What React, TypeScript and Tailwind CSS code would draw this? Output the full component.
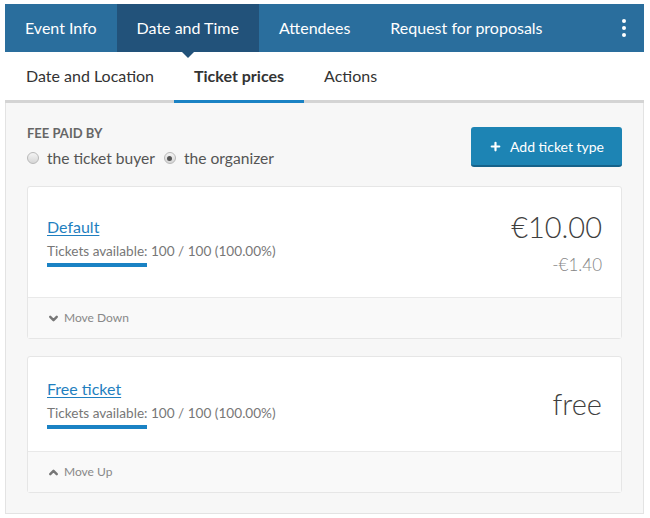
import { ChevronDown, ChevronUp, Plus } from 'lucide-react'

const topTabs = ['Event Info', 'Date and Time', 'Attendees', 'Request for proposals']
const subTabs = ['Date and Location', 'Ticket prices', 'Actions']

type Ticket = { name: string; price: string; fee?: string; move: 'down' | 'up' }

const tickets: Ticket[] = [
  { name: 'Default', price: '€10.00', fee: '-€1.40', move: 'down' },
  { name: 'Free ticket', price: 'free', move: 'up' },
]

function Radio({ checked }: { checked?: boolean }) {
  return (
    <span className="w-3 h-3 rounded-full border border-[#b9b9b9] bg-gradient-to-b from-[#f4f4f4] to-[#d6d6d6] flex items-center justify-center shrink-0">
      {checked && <span className="w-[5px] h-[5px] rounded-full bg-[#555]" />}
    </span>
  )
}

function TicketCard({ t }: { t: Ticket }) {
  return (
    <div className="border border-[#e6e6e6] rounded-[3px] bg-white">
      <div className="flex items-center justify-between px-[19px] py-[22px]">
        <div>
          <a className="block text-[16px] leading-5 text-[#1f7fc0] underline underline-offset-2">{t.name}</a>
          <div className="text-[13.6px] leading-[18px] text-[#777] mt-[5px]">Tickets available: 100 / 100 (100.00%)</div>
          <div className="w-[100px] h-1 bg-[#1a82c4] mt-[3px]" />
        </div>
        <div className="text-right">
          <div className="text-[29px] leading-9 font-light text-[#3f3f3f]">{t.price}</div>
          {t.fee && <div className="text-[17px] leading-5 font-light text-[#858585] mt-[10px]">{t.fee}</div>}
        </div>
      </div>
      <div className="border-t border-[#e9e9e9] bg-[#f9f9f9] px-[19px] py-3 flex items-center gap-1 text-[12px] leading-4 text-[#888]">
        {t.move === 'down' ? (
          <ChevronDown size={13} strokeWidth={4.5} className="text-[#777]" />
        ) : (
          <ChevronUp size={13} strokeWidth={4.5} className="text-[#777]" />
        )}
        {t.move === 'down' ? 'Move Down' : 'Move Up'}
      </div>
    </div>
  )
}

export default function App() {
  return (
    <div className="min-h-[518px] bg-white pt-1 pl-[5px] pr-[6px] font-['Lato','Open_Sans',sans-serif] text-[#555]">
      {/* top tabs */}
      <div className="h-12 bg-[#2a6e9d] flex items-stretch text-white text-[16px]">
        {topTabs.map(tab => (
          <div
            key={tab}
            className={`relative px-5 flex items-center ${tab === 'Date and Time' ? 'bg-[#22527a]' : ''}`}
          >
            {tab}
            {tab === 'Date and Time' && (
              <span className="absolute left-1/2 -translate-x-1/2 top-full w-0 h-0 border-x-[6px] border-x-transparent border-t-[6px] border-t-[#22527a]" />
            )}
          </div>
        ))}
        <div className="ml-auto w-10 flex flex-col items-center justify-center gap-[3px]">
          <span className="w-1 h-1 rounded-full bg-white" />
          <span className="w-1 h-1 rounded-full bg-white" />
          <span className="w-1 h-1 rounded-full bg-white" />
        </div>
      </div>

      {/* sub tabs */}
      <div className="bg-white flex border-b-[3px] border-[#d4d4d4] pl-px text-[16px] text-[#333]">
        {subTabs.map(tab => (
          <div
            key={tab}
            className={`h-[51px] px-5 flex items-center -mb-[3px] border-b-[3px] ${
              tab === 'Ticket prices' ? 'font-bold border-[#1a82c4]' : 'border-transparent'
            }`}
          >
            {tab}
          </div>
        ))}
      </div>

      {/* content */}
      <div className="bg-[#f7f7f7] border-x border-b border-[#e3e3e3] px-[21px] pt-[23px] pb-5">
        <div className="flex items-center justify-between">
          <div>
            <div className="text-[13px] leading-[14px] font-bold text-[#666] uppercase">Fee paid by</div>
            <div className="flex items-center mt-2 text-[15.6px] leading-5 text-[#555]">
              <Radio />
              <span className="ml-2 mr-[9px]">the ticket buyer</span>
              <Radio checked />
              <span className="ml-2">the organizer</span>
            </div>
          </div>
          <button className="h-10 w-[151px] rounded-[3px] bg-[#1d84b4] border-b-2 border-[#15628a] text-white text-[14px] flex items-center justify-center gap-2">
            <Plus size={13} strokeWidth={4} />
            Add ticket type
          </button>
        </div>

        <div className="mt-[18px] flex flex-col gap-[17px]">
          {tickets.map(t => (
            <TicketCard key={t.name} t={t} />
          ))}
        </div>
      </div>
    </div>
  )
}
